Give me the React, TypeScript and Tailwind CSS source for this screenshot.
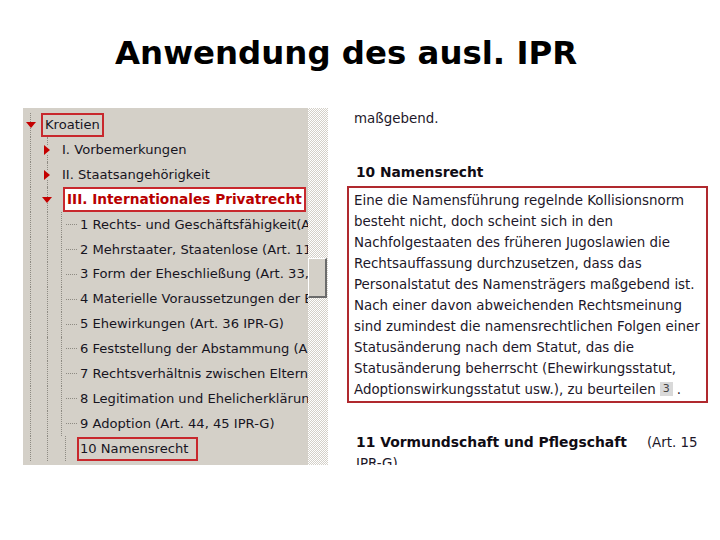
import React from 'react';

const FONT = "font-['DejaVu_Sans',Verdana,sans-serif]";

const Line = () => <div className="w-0 flex-1 border-l border-dotted border-[#8e8b83]" />;

const ArrowDown = () => (
  <svg width="10" height="6" viewBox="0 0 10 6" className="shrink-0">
    <path d="M0 0h10L5 6z" fill="#c40000" />
  </svg>
);

const ArrowRight = () => (
  <svg width="6" height="10" viewBox="0 0 6 10" className="shrink-0">
    <path d="M0 0v10l6-5z" fill="#c40000" />
  </svg>
);

// one guide column of the tree; optional arrow sits on the dotted line
const Guide: React.FC<{ w: string; arrow?: 'down' | 'right'; leaf?: boolean }> = ({ w, arrow, leaf }) => (
  <div className={`${w} shrink-0 flex`}>
    <div className="flex-1 flex flex-col items-center">
      <Line />
      {arrow === 'down' && <ArrowDown />}
      {arrow === 'right' && <ArrowRight />}
      {arrow && <Line />}
    </div>
    {leaf && (
      <div className="flex-1 flex flex-col justify-center -ml-px -mr-[3px]">
        <div className="h-0 border-t border-dotted border-[#8e8b83]" />
      </div>
    )}
  </div>
);

const leaves = [
  '1 Rechts- und Geschäftsfähigkeit(Art. 14 IPR-G)',
  '2 Mehrstaater, Staatenlose (Art. 11 IPR-G)',
  '3 Form der Eheschließung (Art. 33, 34 IPR-G)',
  '4 Materielle Voraussetzungen der Eheschließung',
  '5 Ehewirkungen (Art. 36 IPR-G)',
  '6 Feststellung der Abstammung (Art. 40 IPR-G)',
  '7 Rechtsverhältnis zwischen Eltern und Kindern',
  '8 Legitimation und Ehelicherklärung',
  '9 Adoption (Art. 44, 45 IPR-G)',
];

const Row: React.FC<{ children: React.ReactNode }> = ({ children }) => (
  <div className="h-[24.9px] flex items-stretch whitespace-nowrap">{children}</div>
);

const Tree = () => (
  <div className={`w-[285px] h-full overflow-hidden bg-[#d4d0c8] pt-[4.5px] text-[13.1px] text-[#17151f] ${FONT}`}>
    <Row>
      <Guide w="w-[15px]" arrow="down" />
      <div className="self-center ml-[3px] border-2 border-[#c8282d] px-[2px] leading-[20px]">Kroatien</div>
    </Row>
    <Row>
      <Guide w="w-[15px]" />
      <Guide w="w-[18px]" arrow="right" />
      <div className="self-center ml-[6px]">I. Vorbemerkungen</div>
    </Row>
    <Row>
      <Guide w="w-[15px]" />
      <Guide w="w-[18px]" arrow="right" />
      <div className="self-center ml-[6px]">II. Staatsangehörigkeit</div>
    </Row>
    <Row>
      <Guide w="w-[15px]" />
      <Guide w="w-[18px]" arrow="down" />
      <div className="self-center ml-[7px] border-2 border-[#c8282d] bg-white px-[2px] leading-[21px] font-bold text-[13.7px] text-[#b80000]">
        III. Internationales Privatrecht
      </div>
    </Row>
    {leaves.map((t) => (
      <Row key={t}>
        <Guide w="w-[15px]" />
        <Guide w="w-[18px]" />
        <Guide w="w-[18px]" leaf />
        <div className="self-center ml-[6px]">{t}</div>
      </Row>
    ))}
    <Row>
      <Guide w="w-[15px]" />
      <Guide w="w-[18px]" />
      <Guide w="w-[18px]" />
      <div className="self-center ml-[3px] border-2 border-[#c8282d] w-[121px] pl-px leading-[20px]">10 Namensrecht</div>
    </Row>
  </div>
);

const Scrollbar = () => (
  <div className="w-[20px] h-full flex flex-col bg-[repeating-conic-gradient(#d4d0c8_0%_25%,#ffffff_0%_50%)] bg-[length:2px_2px] pt-[150px]">
    <div className="h-[40px] w-[19px] bg-[#d4d0c8] border-t border-l border-t-white border-l-white border-b-2 border-r-2 border-b-[#6b6b6b] border-r-[#6b6b6b]" />
  </div>
);

const Content = () => (
  <div className={`w-[361px] h-full overflow-hidden text-[13.4px] leading-[21px] text-[#1d1729] ${FONT}`}>
    <div className="pl-[7px]">maßgebend.</div>
    <div className="pl-[9px] mt-[32.5px] font-bold text-[13.8px] text-[#100c14]">10 Namensrecht</div>
    <div className="mt-[3.5px] border-2 border-[#b0292e] pl-[5px] pt-[2px] pb-px whitespace-nowrap">
      Eine die Namensführung regelnde Kollisionsnorm<br />
      besteht nicht, doch scheint sich in den<br />
      Nachfolgestaaten des früheren Jugoslawien die<br />
      Rechtsauffassung durchzusetzen, dass das<br />
      Personalstatut des Namensträgers maßgebend ist.<br />
      Nach einer davon abweichenden Rechtsmeinung<br />
      sind zumindest die namensrechtlichen Folgen einer<br />
      Statusänderung nach dem Statut, das die<br />
      Statusänderung beherrscht (Ehewirkungsstatut,<br />
      Adoptionswirkungsstatut usw.), zu beurteilen
      <span className="ml-[4px] inline-block bg-[#d9d9d9] px-[3px] text-[11px] leading-[14px] align-[2px] text-[#444]">3</span>
      <span className="ml-[4px]">.</span>
    </div>
    <div className="pl-[9px] mt-[28.5px] whitespace-nowrap">
      <span className="font-bold text-[13.9px] text-[#100c14]">11 Vormundschaft und Pflegschaft</span>
      <span className="ml-[20px]">(Art. 15</span>
      <br />
      IPR-G)
    </div>
  </div>
);

export default function App() {
  return (
    <div className="w-[720px] h-[540px] bg-white overflow-hidden">
      <h1 className="pl-[115px] pt-[33px] h-[108px] font-['DejaVu_Sans',Verdana,sans-serif] font-bold text-[32.4px] leading-[40px] text-black">
        Anwendung des ausl. IPR
      </h1>
      <div className="flex h-[357px] pl-[23px]">
        <Tree />
        <Scrollbar />
        <div className="w-[19px]" />
        <Content />
      </div>
    </div>
  );
}
